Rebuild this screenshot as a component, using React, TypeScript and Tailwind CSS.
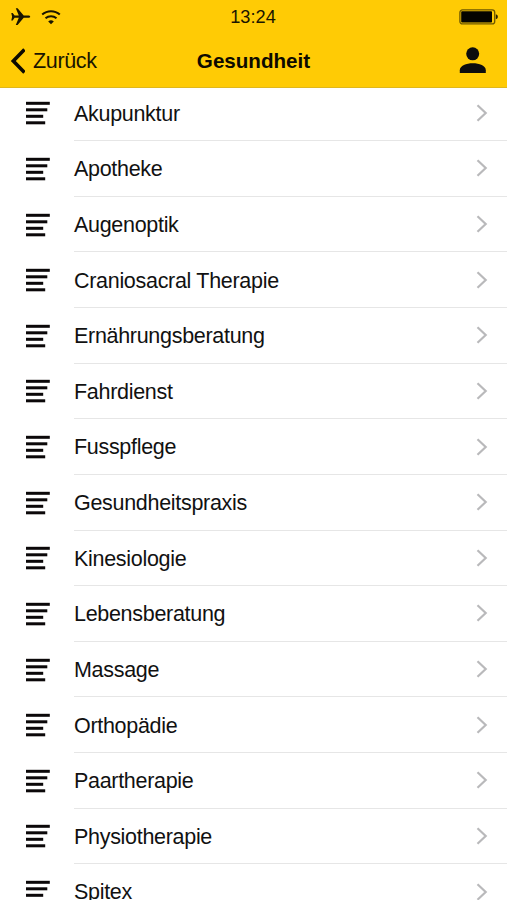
import React from 'react'

const categories = [
    "Akupunktur",
    "Apotheke",
    "Augenoptik",
    "Craniosacral Therapie",
    "Ernährungsberatung",
    "Fahrdienst",
    "Fusspflege",
    "Gesundheitspraxis",
    "Kinesiologie",
    "Lebensberatung",
    "Massage",
    "Orthopädie",
    "Paartherapie",
    "Physiotherapie",
    "Spitex"
]

const PlaneIcon = () => (
    <svg width="20" height="18" viewBox="0 0 20 18" fill="#1a1500">
        <path d="M19.2 8.7c0-.7-.9-1.100-2-1.100h-4.500L6.600.3H4.800l3 7.300H3.600L1.700 5H.3l.8 3.700-.8 3.700h1.400l1.900-2.600h4.200l-3 7.300h1.800l6.100-7.300h4.500c1.100 0 2-.4 2-1.100z" />
    </svg>
)

const WifiIcon = () => (
    <svg width="20" height="15" viewBox="0 0 20 15" fill="none" stroke="#1a1500" strokeWidth="2">
        <path d="M1.200 4.600a13 13 0 0 1 17.600 0" />
        <path d="M4.500 8.300a8.200 8.200 0 0 1 11 0" />
        <path d="M10 14.200 7.200 11.500a4.200 4.200 0 0 1 5.600 0z" fill="#1a1500" stroke="none" />
    </svg>
)

const BatteryIcon = () => (
    <svg width="40" height="16" viewBox="0 0 40 16">
        <rect x=".9" y=".9" width="34.800" height="14" rx="2.500" fill="none" stroke="#6e5800" strokeWidth="1.300" />
        <rect x="2.200" y="2.200" width="30.800" height="11.400" rx=".8" fill="#050400" />
        <path d="M36.800 5.300c1.700.5 2 1.300 2 2.500s-.3 2-2 2.500z" fill="#2a2200" />
    </svg>
)

const UserIcon = () => (
    <svg width="28" height="28" viewBox="0 0 28 28" fill="#0d0d0d">
        <circle cx="13.700" cy="6.800" r="6.500" />
        <path d="M.8 26v-2.700c0-4.700 6.500-7 13-7s13 2.300 13 7V26z" />
    </svg>
)

const ListIcon = () => (
    <svg width="24" height="24" viewBox="0 0 24 24" fill="#0b0809">
        <rect x="0" y=".8" width="23.800" height="3" />
        <rect x="0" y="7.300" width="21.300" height="3" />
        <rect x="0" y="13.800" width="17.200" height="3" />
        <rect x="0" y="20.300" width="19.200" height="3" />
    </svg>
)

const ChevronIcon = () => (
    <svg width="12" height="18" viewBox="0 0 12 18" fill="none" stroke="#b9b9bb" strokeWidth="2.200">
        <path d="M1.500 1.300 9.700 9l-8.200 7.700" />
    </svg>
)

const CategoryRow = ({ name }: { name: string }) => (
    <li className="flex h-[55.64px] shrink-0 pl-[25.6px]">
        <div className="flex w-[48.4px] items-center">
            <ListIcon />
        </div>
        <div className="flex flex-1 items-center justify-between border-b border-[#e6e6e6] pr-[19px]">
            <span className="pt-[2px] text-[21.500px] tracking-[-0.3px] whitespace-nowrap text-[#111]">{name}</span>
            <ChevronIcon />
        </div>
    </li>
)

export default function App() {
    return (
        <div className="flex h-[900px] w-[507px] flex-col overflow-hidden bg-white font-['Liberation_Sans',Arial,sans-serif]">
            <header className="h-[88px] shrink-0 border-b border-[#dfb71d] bg-[#ffcb05]">
                <div className="grid h-[34px] grid-cols-[1fr_auto_1fr] items-center pr-2 pl-[7px]">
                    <div className="flex items-center gap-[10px] pl-[4px]">
                        <PlaneIcon />
                        <WifiIcon />
                    </div>
                    <span className="pt-[2px] text-center text-[18.200px] text-[#1a1500]">13:24</span>
                    <div className="flex justify-end">
                        <BatteryIcon />
                    </div>
                </div>
                <div className="grid h-[54px] grid-cols-[1fr_auto_1fr] items-center pr-5 pl-5">
                    <button className="-ml-[10px] flex items-center gap-[8px] text-[21.500px] tracking-[-0.35px] text-[#1a1500]">
                        <svg width="15" height="26" viewBox="0 0 15 26" fill="none" stroke="#0d0a00" strokeWidth="3.600">
                            <path d="M14.500 1.500 3.300 13l11.200 11.500" />
                        </svg>
                        <span className="pt-px">Zurück</span>
                    </button>
                    <h1 className="text-center text-[20.600px] font-bold text-[#0d0a00]">Gesundheit</h1>
                    <div className="flex justify-end">
                        <UserIcon />
                    </div>
                </div>
            </header>
            <ul className="-mt-[2.500px] flex flex-col">
                {categories.map((name) => (
                    <CategoryRow key={name} name={name} />
                ))}
            </ul>
        </div>
    )
}
